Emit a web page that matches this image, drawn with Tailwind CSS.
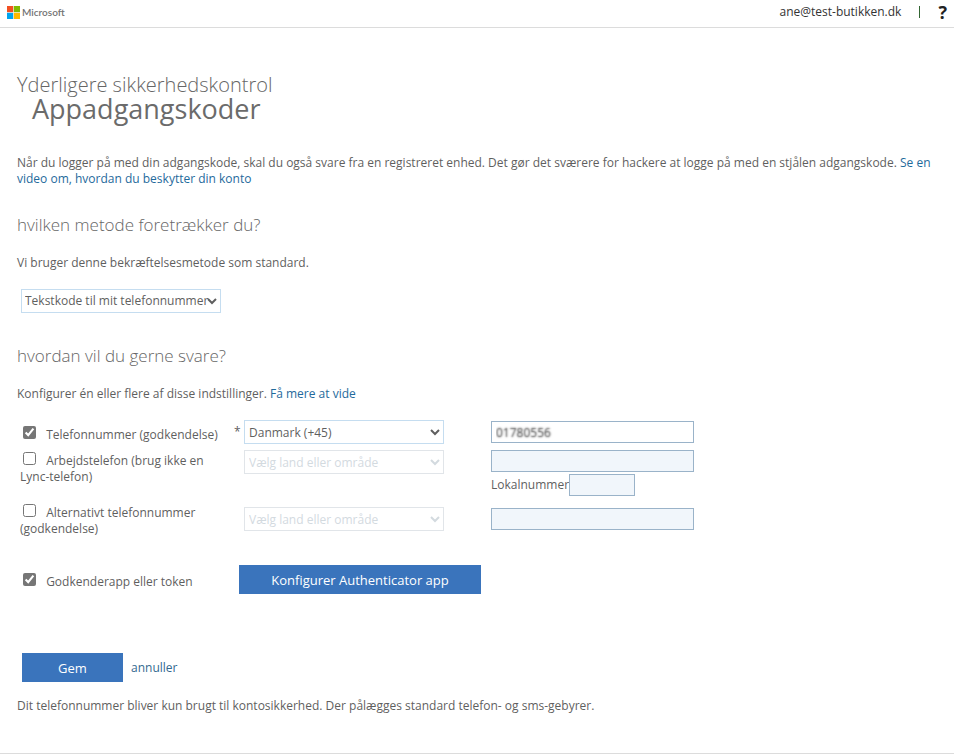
<!DOCTYPE html>
<html lang="da">
<head>
  <meta charset="UTF-8" />
  <meta name="viewport" content="width=device-width, initial-scale=1.0"/>
  <title>Yderligere sikkerhedskontrol</title>
  <script src="https://cdn.jsdelivr.net/npm/@tailwindcss/browser@4"></script>
</head>
<body class="bg-white font-['Open_Sans','Noto_Sans',sans-serif] text-[12px] leading-4 text-[#5f5f5f]">

  <!-- Header -->
  <header class="flex h-7 items-center justify-between border-b border-[#dcdcdc] pl-[7px] pr-[7px] pb-[3px]">
    <a href="#" class="flex items-center gap-0.5 text-[#737373]">
      <svg class="h-[13px] w-[13px]" viewBox="0 0 13 13" aria-hidden="true">
        <rect width="6.2" height="6.2" fill="#f25022"/>
        <rect x="6.8" width="6.2" height="6.2" fill="#7fba00"/>
        <rect y="6.8" width="6.2" height="6.2" fill="#00a4ef"/>
        <rect x="6.8" y="6.8" width="6.2" height="6.2" fill="#ffb900"/>
      </svg>
      <span class="font-['Lato',sans-serif] text-[10px] font-semibold">Microsoft</span>
    </a>
    <div class="flex items-center text-[#333]">
      <span>ane@test-butikken.dk</span>
      <span class="ml-[18px] h-3 w-px bg-[#336633]"></span>
      <button type="button" aria-label="Hjælp" class="ml-[18px] text-[18px] font-bold text-[#222]">?</button>
    </div>
  </header>

  <main class="border-b border-[#dcdcdc] px-[17px] pt-[45px] pb-[39px]">
    <h1 class="text-[20px] leading-6 font-light text-[#666]">Yderligere sikkerhedskontrol</h1>
    <h2 class="pl-[15px] text-[27px] leading-6 text-[#6b6b6b]">Appadgangskoder</h2>

    <p class="mt-[34px]">
      Når du logger på med din adgangskode, skal du også svare fra en registreret enhed. Det gør det sværere for hackere at logge på med en stjålen adgangskode.
      <a href="#" class="text-[#1f6a9c]">Se en video om, hvordan du beskytter din konto</a>
    </p>

    <h3 class="mt-6 text-[17px] leading-7 font-light text-[#666]">hvilken metode foretrækker du?</h3>
    <p class="mt-4">Vi bruger denne bekræftelsesmetode som standard.</p>
    <div class="mt-[18px] ml-1 grid w-[200px] items-center">
      <select aria-label="Bekræftelsesmetode" class="col-start-1 row-start-1 h-6 w-full appearance-none border border-[#c5ddf0] bg-white pl-[3px]">
        <option>Tekstkode til mit telefonnummer</option>
      </select>
      <svg class="pointer-events-none col-start-1 row-start-1 mr-1 h-2 w-2.5 justify-self-end" viewBox="0 0 10 8" fill="none" stroke="#5f5f5f" stroke-width="2" aria-hidden="true">
        <path d="M1 2l4 4 4-4"/>
      </svg>
    </div>

    <h3 class="mt-[29px] text-[17px] leading-7 font-light text-[#666]">hvordan vil du gerne svare?</h3>
    <p class="mt-4">Konfigurer én eller flere af disse indstillinger. <a href="#" class="text-[#1f6a9c]">Få mere at vide</a></p>

    <!-- Contact methods -->
    <form>
      <div class="mt-[18px] grid grid-cols-[214px_10px_247px_1fr] pl-[3px]">
        <div class="h-[30px] pt-1.5">
          <input type="checkbox" id="phone" checked class="ml-[3px] mr-[7px] h-[13px] w-[13px] accent-[#767676]">
          <label for="phone">Telefonnummer (godkendelse)</label>
        </div>
        <span class="pt-1">*</span>
        <div>
          <select aria-label="Land" class="block h-6 w-[200px] border border-[#c5ddf0] bg-white">
            <option>Danmark (+45)</option>
          </select>
        </div>
        <div class="pt-px">
          <input type="text" aria-label="Telefonnummer" value="01780556" class="block h-[22px] w-[203px] border border-[#9ab3c9] px-1 text-transparent text-shadow-[0_0_2px_#333]">
        </div>

        <div class="h-[54px] w-[190px] pt-0.5">
          <input type="checkbox" id="work" class="ml-[3px] mr-[7px] h-[13px] w-[13px]">
          <label for="work">Arbejdstelefon (brug ikke en Lync-telefon)</label>
        </div>
        <span></span>
        <div>
          <select aria-label="Land for arbejdstelefon" disabled class="block h-6 w-[200px] border border-[#e1e5e9] bg-white font-medium text-[#d3dadf] opacity-100">
            <option>Vælg land eller område</option>
          </select>
        </div>
        <div>
          <input type="text" aria-label="Arbejdstelefon" disabled class="block h-[22px] w-[203px] border border-[#9ab3c9] bg-[#f1f6fb]">
          <div class="mt-0.5 flex items-center">
            <label for="ext">Lokalnummer</label>
            <input type="text" id="ext" disabled class="h-[22px] w-[66px] border border-[#9ab3c9] bg-[#f1f6fb]">
          </div>
        </div>

        <div class="h-[61px] w-[190px]">
          <input type="checkbox" id="alternate" class="ml-[3px] mr-[7px] h-[13px] w-[13px]">
          <label for="alternate">Alternativt telefonnummer (godkendelse)</label>
        </div>
        <span></span>
        <div class="pt-[3px]">
          <select aria-label="Land for alternativt telefonnummer" disabled class="block h-6 w-[200px] border border-[#e1e5e9] bg-white font-medium text-[#d3dadf] opacity-100">
            <option>Vælg land eller område</option>
          </select>
        </div>
        <div class="pt-1">
          <input type="text" aria-label="Alternativt telefonnummer" disabled class="block h-[22px] w-[203px] border border-[#9ab3c9] bg-[#f1f6fb]">
        </div>

        <div class="pt-2">
          <input type="checkbox" id="authenticator" checked class="ml-[3px] mr-[7px] h-[13px] w-[13px] accent-[#767676]">
          <label for="authenticator">Godkenderapp eller token</label>
        </div>
        <div class="col-span-3 pl-[5px]">
          <button type="button" class="block h-[29px] w-[242px] bg-[#3a74bc] text-[13px] text-white">Konfigurer Authenticator app</button>
        </div>
      </div>

      <!-- Actions -->
      <div class="mt-[59px] ml-[5px] flex items-center gap-2">
        <button type="submit" class="h-[29px] w-[101px] bg-[#3a74bc] text-[13px] text-white">Gem</button>
        <a href="#" class="text-[#336a8f]">annuller</a>
      </div>
    </form>

    <p class="mt-4">Dit telefonnummer bliver kun brugt til kontosikkerhed. Der pålægges standard telefon- og sms-gebyrer.</p>
  </main>

</body>
</html>
